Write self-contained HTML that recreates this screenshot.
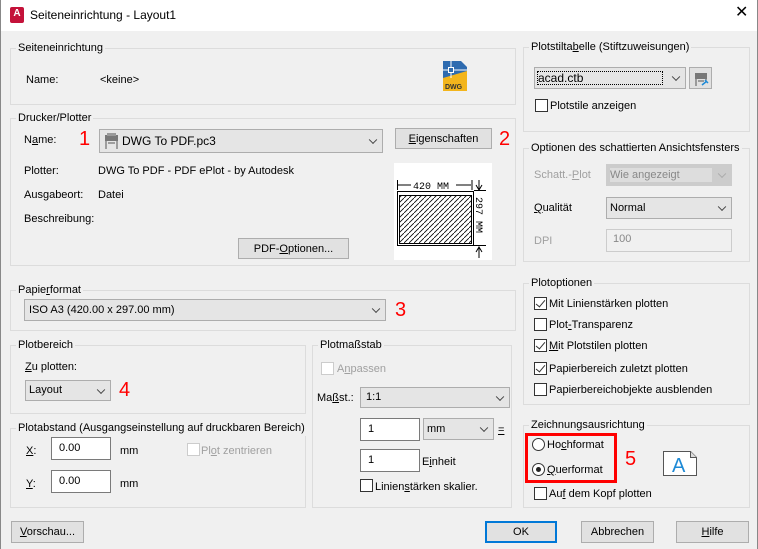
<!DOCTYPE html><html><head><meta charset="utf-8"><style>
*{box-sizing:border-box}
body{margin:0;width:758px;height:549px;background:#f0f0f0;font-family:"Liberation Sans",sans-serif;font-size:11px;line-height:15px;color:#000;position:relative;overflow:hidden}
.a{position:absolute;white-space:nowrap}
.g{position:absolute;border:1px solid #dcdcdc}
.lg{position:absolute;background:#f0f0f0;padding:0 2px;top:-8px;left:5px;white-space:nowrap}
.cb{position:absolute;background:#e5e5e5;border:1px solid #adadad}
.cb .ar{position:absolute;right:6px;top:50%;width:6px;height:6px;border-right:1px solid #444;border-bottom:1px solid #444;transform:translateY(-70%) rotate(45deg)}
.btn{position:absolute;background:#e1e1e1;border:1px solid #adadad;text-align:center;line-height:20px}
.tb{position:absolute;background:#fff;border:1px solid #7a7a7a;padding-left:7px;line-height:20px}
.ck{position:absolute;width:13px;height:13px;border:1px solid #333;background:#fff}
.ck.on::after{content:"";position:absolute;left:3px;top:0px;width:4px;height:8px;border-right:1.5px solid #333;border-bottom:1.5px solid #333;transform:rotate(40deg)}
.dis{color:#a0a0a0}
.red{position:absolute;color:#f00;font-size:20px;line-height:24px}
u{text-decoration:underline}
</style></head><body>
<div class="a" style="left:0;top:0;width:758px;height:31px;background:#fff"></div>
<div class="a" style="left:0;top:0;width:1px;height:549px;background:#888"></div>
<div class="a" style="left:757px;top:0;width:1px;height:549px;background:#888"></div>
<div class="a" style="left:10px;top:7px;width:14px;height:16px;background:#c4123a;border-radius:2px;color:#fff;font-size:10px;font-weight:bold;text-align:center;line-height:13px">A</div>
<div class="a" style="left:30px;top:8px;font-size:12px">Seiteneinrichtung - Layout1</div>
<div class="a" style="left:735px;top:5px;font-size:16px;font-weight:300">✕</div>

<div class="g" style="left:10px;top:48px;width:506px;height:57px"><span class="lg">Seiteneinrichtung</span></div>
<div class="a" style="left:26px;top:73px">Name:</div>
<div class="a" style="left:100px;top:73px">&lt;keine&gt;</div>
<svg class="a" style="left:443px;top:61px" width="25" height="30"><path d="M0 0h18l6 6v24H0z" fill="#2e6bb0"/><path d="M0 17L24 10V30H0z" fill="#f3b51c"/><path d="M8 0v17M0 9h24" stroke="#fff" stroke-width="1"/><rect x="5.5" y="6.5" width="5" height="5" fill="#2e6bb0" stroke="#fff"/><text x="2" y="28" font-size="7" font-family="Liberation Sans" fill="#333" font-weight="bold">DWG</text></svg>

<div class="g" style="left:10px;top:118px;width:506px;height:148px"><span class="lg">Drucker/Plotter</span></div>
<div class="a" style="left:24px;top:133px">N<u>a</u>me:</div>
<div class="red" style="left:79px;top:127px">1</div>
<div class="cb" style="left:99px;top:129px;width:284px;height:24px"><svg class="a" style="left:4px;top:3px" width="15" height="16"><rect x="1" y="2" width="13" height="6" fill="#777"/><rect x="3" y="0" width="9" height="3" fill="#999"/><path d="M2 8v8M13 8v8M4 10h7" stroke="#555"/></svg><span class="a" style="left:22px;top:4px;font-size:12px">DWG To PDF.pc3</span><span class="ar"></span></div>
<div class="btn" style="left:395px;top:128px;width:97px;height:21px"><u>E</u>igenschaften</div>
<div class="red" style="left:499px;top:127px">2</div>
<div class="a" style="left:24px;top:164px">Plotter:</div>
<div class="a" style="left:98px;top:164px">DWG To PDF - PDF ePlot - by Autodesk</div>
<div class="a" style="left:24px;top:188px">Ausgabeort:</div>
<div class="a" style="left:98px;top:188px">Datei</div>
<div class="a" style="left:24px;top:212px">Beschreibung:</div>
<div class="btn" style="left:238px;top:238px;width:111px;height:21px">PDF-<u>O</u>ptionen...</div>
<svg class="a" style="left:394px;top:163px" width="98" height="97"><rect width="98" height="97" fill="#fff"/><defs><pattern id="h" width="5" height="5" patternUnits="userSpaceOnUse"><path d="M0 5L5 0" stroke="#000" stroke-width="0.8"/></pattern></defs><rect x="3.5" y="28.5" width="76" height="54" fill="none" stroke="#000"/><rect x="5.5" y="32.5" width="72" height="48" fill="url(#h)" stroke="#000"/><path d="M3.5 17v10M3 22h14M62 22h15M78 17v10M85 17v9M82 22l3 5 3-5M80 27.5h12M80 82.5h12M85 84v11M82 89l3-5 3 5" stroke="#000" fill="none"/><text x="19" y="26" font-size="10" font-family="Liberation Mono">420 MM</text><text x="82" y="34" font-size="10" font-family="Liberation Mono" transform="rotate(90 82 34)">297 MM</text></svg>

<div class="g" style="left:10px;top:290px;width:506px;height:41px"><span class="lg">Papie<u>r</u>format</span></div>
<div class="cb" style="left:24px;top:299px;width:362px;height:22px"><span class="a" style="left:4px;top:3px">ISO A3 (420.00 x 297.00 mm)</span><span class="ar"></span></div>
<div class="red" style="left:395px;top:298px">3</div>

<div class="g" style="left:10px;top:345px;width:296px;height:69px"><span class="lg">Plotbereich</span></div>
<div class="a" style="left:25px;top:360px"><u>Z</u>u plotten:</div>
<div class="cb" style="left:25px;top:380px;width:86px;height:21px"><span class="a" style="left:3px;top:2px">Layout</span><span class="ar"></span></div>
<div class="red" style="left:119px;top:378px">4</div>

<div class="g" style="left:10px;top:428px;width:296px;height:80px"><span class="lg">Plotabstand (Ausgangseinstellung auf druckbaren Bereich)</span></div>
<div class="a" style="left:26px;top:444px"><u>X</u>:</div>
<div class="tb" style="left:51px;top:437px;width:60px;height:23px">0.00</div>
<div class="a" style="left:120px;top:444px">mm</div>
<div class="ck" style="left:187px;top:443px;border-color:#ccc"></div>
<div class="a dis" style="left:201px;top:444px">Pl<u>o</u>t zentrieren</div>
<div class="a" style="left:26px;top:477px"><u>Y</u>:</div>
<div class="tb" style="left:51px;top:470px;width:60px;height:23px">0.00</div>
<div class="a" style="left:120px;top:477px">mm</div>

<div class="g" style="left:312px;top:345px;width:200px;height:163px"><span class="lg">Plotmaßstab</span></div>
<div class="ck" style="left:321px;top:362px;border-color:#ccc"></div>
<div class="a dis" style="left:337px;top:362px">A<u>n</u>passen</div>
<div class="a" style="left:317px;top:391px">Ma<u>ß</u>st.:</div>
<div class="cb" style="left:360px;top:387px;width:150px;height:21px"><span class="a" style="left:5px;top:2px">1:1</span><span class="ar"></span></div>
<div class="tb" style="left:360px;top:418px;width:60px;height:23px">1</div>
<div class="cb" style="left:423px;top:418px;width:71px;height:22px"><span class="a" style="left:3px;top:3px">mm</span><span class="ar"></span></div>
<div class="a" style="left:498px;top:423px"><u>=</u></div>
<div class="tb" style="left:360px;top:449px;width:60px;height:23px">1</div>
<div class="a" style="left:422px;top:455px">E<u>i</u>nheit</div>
<div class="ck" style="left:360px;top:479px"></div>
<div class="a" style="left:375px;top:480px">Linien<u>s</u>tärken skalier.</div>

<div class="g" style="left:523px;top:47px;width:227px;height:85px"><span class="lg">Plotstilta<u>b</u>elle (Stiftzuweisungen)</span></div>
<div class="cb" style="left:534px;top:67px;width:152px;height:22px"><span class="a" style="left:2px;top:3px;border:1px dotted #000;width:126px;height:14px;line-height:12px;font-size:12px">acad.ctb</span><span class="ar"></span></div>
<div class="btn" style="left:689px;top:67px;width:23px;height:22px"><svg style="margin-top:3px" width="16" height="15"><rect x="2" y="2" width="12" height="6" fill="#777"/><path d="M3 8v7M13 8v3M5 10h6" stroke="#555"/><path d="M9 14l5-4M12 9l3 3" stroke="#1e8ad6" stroke-width="1.5"/></svg></div>
<div class="ck" style="left:535px;top:99px"></div>
<div class="a" style="left:550px;top:99px">Plotstile anzeigen</div>

<div class="g" style="left:523px;top:148px;width:227px;height:114px"><span class="lg">Optionen des schattierten Ansichtsfensters</span></div>
<div class="a dis" style="left:534px;top:168px">Schatt.-<u>P</u>lot</div>
<div class="cb" style="left:606px;top:164px;width:126px;height:22px;background:#ccc;border-color:#ccc"><span class="a dis" style="left:3px;top:3px;background:#ddd;width:102px;height:14px;color:#888;line-height:14px">Wie angezeigt</span><span class="ar" style="border-color:#aaa"></span></div>
<div class="a" style="left:534px;top:201px"><u>Q</u>ualität</div>
<div class="cb" style="left:606px;top:197px;width:126px;height:22px"><span class="a" style="left:3px;top:3px">Normal</span><span class="ar"></span></div>
<div class="a dis" style="left:534px;top:234px">DPI</div>
<div class="a" style="left:606px;top:229px;width:126px;height:23px;border:1px solid #ccc;padding-left:6px;line-height:18px;color:#888">100</div>

<div class="g" style="left:523px;top:283px;width:227px;height:122px"><span class="lg">Plotoptionen</span></div>
<div class="ck on" style="left:534px;top:297px"></div><div class="a" style="left:549px;top:297px">Mit Linienstärken plotten</div>
<div class="ck" style="left:534px;top:318px"></div><div class="a" style="left:549px;top:318px">Plot<u>-</u>Transparenz</div>
<div class="ck on" style="left:534px;top:339px"></div><div class="a" style="left:549px;top:339px"><u>M</u>it Plotstilen plotten</div>
<div class="ck on" style="left:534px;top:362px"></div><div class="a" style="left:549px;top:362px">Papierbereich zuletzt plotten</div>
<div class="ck" style="left:534px;top:383px"></div><div class="a" style="left:549px;top:383px">Papierbereichobjekte ausblenden</div>

<div class="g" style="left:523px;top:425px;width:227px;height:83px"><span class="lg">Zeichnungsausrichtung</span></div>
<div class="a" style="left:525px;top:433px;width:92px;height:50px;border:3px solid #f00"></div>
<div class="a" style="left:532px;top:438px;width:13px;height:13px;border:1px solid #333;border-radius:50%;background:#fff"></div>
<div class="a" style="left:547px;top:438px">Ho<u>c</u>hformat</div>
<div class="a" style="left:532px;top:463px;width:13px;height:13px;border:1px solid #333;border-radius:50%;background:#fff"><div style="position:absolute;left:3px;top:3px;width:5px;height:5px;border-radius:50%;background:#222"></div></div>
<div class="a" style="left:547px;top:463px"><u>Q</u>uerformat</div>
<div class="red" style="left:625px;top:447px">5</div>
<svg class="a" style="left:663px;top:451px" width="34" height="25"><path d="M0.5 0.5h27l6 6v18H0.5z" fill="#fff" stroke="#555"/><path d="M27.5 0.5v6h6" fill="#ddd" stroke="#555"/><text x="9" y="21" font-size="20" font-family="Liberation Sans" fill="#1e8ad6">A</text></svg>
<div class="ck" style="left:534px;top:487px"></div><div class="a" style="left:549px;top:487px">Au<u>f</u> dem Kopf plotten</div>

<div class="btn" style="left:11px;top:521px;width:73px;height:22px"><u>V</u>orschau...</div>
<div class="btn" style="left:485px;top:521px;width:72px;height:22px;border:2px solid #0078d7;line-height:18px">OK</div>
<div class="btn" style="left:581px;top:521px;width:73px;height:22px">Abbrechen</div>
<div class="btn" style="left:676px;top:521px;width:73px;height:22px"><u>H</u>ilfe</div>
</body></html>
